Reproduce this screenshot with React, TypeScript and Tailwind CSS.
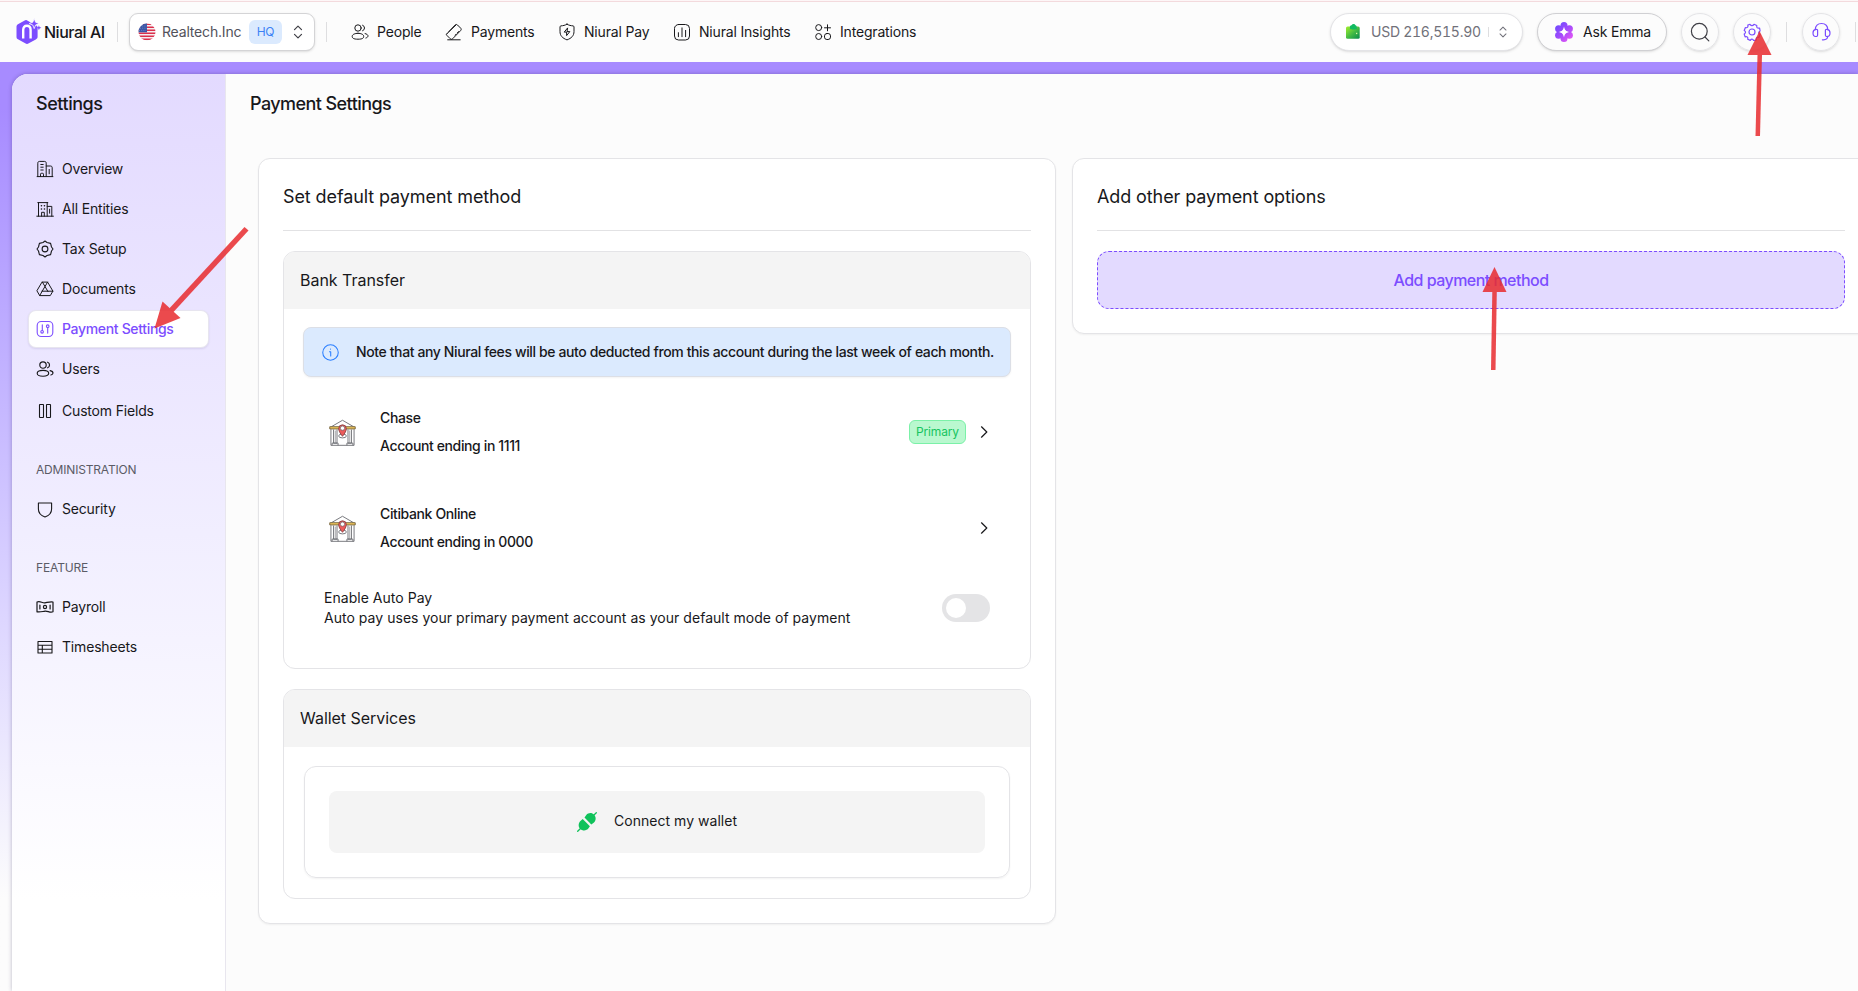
import type { ReactNode } from "react";

type IconProps = { children: ReactNode; className?: string; box?: string; w?: number };

function Icon({ children, className = "size-[18px]", box = "0 0 18 18", w = 1 }: IconProps) {
  return (
    <svg
      viewBox={box}
      className={`shrink-0 ${className}`}
      fill="none"
      stroke="currentColor"
      strokeWidth={w}
      strokeLinecap="round"
      strokeLinejoin="round"
    >
      {children}
    </svg>
  );
}

const People = ({ w }: { w?: number }) => (
  <Icon w={w}>
    <circle cx="7" cy="5" r="3.200" />
    <path d="M11.600 2.200a3 3 0 0 1 0 5.600" />
    <path d="M7 10.300c3.300 0 5.700 1.300 5.700 3s-1 2.900-5.700 2.900-5.800-1.200-5.800-2.900 2.500-3 5.800-3z" />
    <path d="M14.100 10.600c1.700.4 2.900 1.200 2.900 2.300 0 1-.8 1.700-2.100 2.100" />
  </Icon>
);

const Eraser = () => (
  <Icon>
    <path d="M1.800 10.900 10 2.100c.8-.8 1.700-.8 2.500-.1l3.100 3.100c.8.8.8 1.700 0 2.500l-7.900 8.100c-.8.8-1.700.8-2.500 0l-3.400-3.400c-.5-.5-.5-.9 0-1.400z" />
    <path d="m3.600 9 7.400-7M2.700 16.800h12.500M10.200 12.100l.9-.9M12.300 9.900l1.300-1.400" />
  </Icon>
);

const ShieldBolt = () => (
  <Icon>
    <path d="M9 1.200c2 1.200 4 1.500 6.100 1.700.6.100.9.400.9 1v4.600c0 4.300-2.600 6.700-7 8.400-4.400-1.700-7-4.100-7-8.400V3.900c0-.6.3-.9.900-1C5 2.700 7 2.400 9 1.200z" />
    <path d="M9.400 5.200 6.200 9.100h2.400v3.500l3.200-4H9.400z" />
  </Icon>
);

const Chart = () => (
  <Icon>
    <rect x="1.500" y="1.500" width="15" height="15.500" rx="4" />
    <path d="M5.400 9.700v4M9 4.900v8.800M12.600 7.400v6.300" />
  </Icon>
);

const Apps = () => (
  <Icon>
    <circle cx="4.700" cy="4.600" r="3" />
    <circle cx="4.700" cy="13.500" r="3" />
    <rect x="10.500" y="10.500" width="6" height="6" rx="2.400" />
    <path d="M13.500 1.800v6M10.500 4.800h6" />
  </Icon>
);

const Tower = () => (
  <Icon>
    <path d="M1.800 16.600V3.200c0-1.200.6-1.800 1.800-1.800h4.800c1.200 0 1.800.6 1.800 1.800v13.400M10.200 6h4.200c1.200 0 1.800.6 1.800 1.800v8.800M1.100 16.600h15.800M4.500 16.600v-2.400c0-.6.3-.9.900-.9h1.200c.6 0 .9.300.9.900v2.400" />
    <path d="M4.800 4.500h2.400M4.800 7.200h2.400M4.800 10h2.400M13.200 9.400v4.400" />
  </Icon>
);

const Office = () => (
  <Icon>
    <path d="M.8 16.200h16.600M2.500 16.200V2.600M1.800 2.600h10M11.200 2.600v13.600M11.200 6.400h4.600v9.800M5.600 16.200v-3.900h2.700v3.900M13.600 9.200v4" />
    <path d="M5.400 5.800h.1M8.400 5.800h.1M5.400 8.900h.1M8.400 8.900h.1" strokeWidth="1.500" />
  </Icon>
);

const Badge = () => (
  <Icon w={1.100}>
    <path d="M9 1 11 2.500 14.600 3.400 15.500 7 17 9 15.500 11 14.600 14.600 11 15.500 9 17 7 15.500 3.400 14.600 2.500 11 1 9 2.500 7 3.400 3.400 7 2.500z" />
    <circle cx="9" cy="9" r="2.900" />
  </Icon>
);

const Drive = () => (
  <Icon>
    <path d="M6.400 2.100h5.200l5.300 9-2.600 4.500H3.700l-2.600-4.500z" />
    <path d="M6.400 2.100 9 6.500l3 5.100M11.600 2.100 5.900 11.700l-2.200 3.900M5.900 11.200h11" />
  </Icon>
);

const Sliders = () => (
  <Icon w={1.100}>
    <rect x="1.200" y="1.500" width="15.600" height="15" rx="4" />
    <path d="M6.300 4.900v5.600M11.700 7.500v5.600" />
    <circle cx="6.100" cy="11.800" r="1.300" />
    <circle cx="11.700" cy="6.200" r="1.300" />
  </Icon>
);

const Columns = () => (
  <Icon w={1.100}>
    <rect x="3.500" y="2.500" width="4" height="13" rx=".4" />
    <rect x="10.500" y="2.500" width="4" height="13" rx=".4" />
  </Icon>
);

const Shield = () => (
  <Icon w={1.100}>
    <path d="M2.400 3h13.200v6c0 3.900-2.600 6.600-6.600 8-4-1.400-6.600-4.100-6.600-8z" />
  </Icon>
);

const Cash = () => (
  <Icon w={1.200}>
    <path d="M1 4c3-1.600 5.300 1.300 8 .8 3-.5 5-1.200 8-.8v9.800c-3 1.500-5.300-1.200-8-.7-3 .5-5 1.300-8 .7z" />
    <circle cx="9" cy="9" r="1.600" />
    <path d="M3.900 7v4M14.100 7v4" />
  </Icon>
);

const Table = () => (
  <Icon w={1.100}>
    <path d="M2 3.500h14V15H2zM2 7.200h14M2 11.200h14M6.300 7.200V15" />
  </Icon>
);

const UpDown = ({ className }: { className: string }) => (
  <Icon box="0 0 10 14" className={className} w={1.200}>
    <path d="M1.500 4.700 5 1.200l3.500 3.500M1.500 9.300 5 12.800l3.500-3.500" />
  </Icon>
);

const Logo = () => (
  <svg viewBox="0 0 26 26" className="size-[26px] shrink-0 overflow-visible">
    <path
      d="M10.300 1 17 4.700c3.500 1.900 4.600 2 4.600 4v8.800c0 1.500-.4 2.100-1.800 2.900l-7 3.900c-1.400.8-2.200.8-3.600 0l-6.800-3.800C1 19.700.5 19.200.5 17.700V8c0-1.500.5-2.100 1.900-2.900L8.700 1.400c.7-.4 1-.6 1.600-.4z"
      fill="#7c4dff"
    />
    <path d="M7.200 19.500V11c0-3 1.400-4.300 3.700-4.300s3.700 1.300 3.700 4.300v8.500" fill="none" stroke="#fff" strokeWidth="2.400" />
    <path d="m18.200-.4 1.400 3.600 3.600 1.400-3.600 1.400-1.400 3.600-1.400-3.600-3.600-1.400 3.600-1.400z" fill="#7c4dff" stroke="#fcfcfc" strokeWidth=".8" />
    <path d="m22.900 6.200.7 1.800 1.800.7-1.800.7-.7 1.800-.7-1.800-1.800-.7 1.800-.7z" fill="#7c4dff" />
  </svg>
);

const Flag = () => (
  <svg viewBox="0 0 18 18" className="size-[18px] shrink-0">
    <clipPath id="flag">
      <circle cx="9" cy="9" r="8.500" />
    </clipPath>
    <g clipPath="url(#flag)">
      <rect width="18" height="18" fill="#f5eef0" />
      <path d="M0 1.300h18M0 4.300h18M0 7.300h18M0 10.300h18M0 13.300h18M0 16.300h18" stroke="#dc2f4b" strokeWidth="1.400" />
      <rect width="9" height="9.300" fill="#3a56a5" />
      <path d="M2 3h7M2 5.200h7M1 7.400h7" stroke="#8fa3d6" strokeWidth=".6" strokeDasharray="1 1.200" />
    </g>
  </svg>
);

const Wallet = () => (
  <svg viewBox="0 0 14 15" className="h-[15px] w-[14px] shrink-0">
    <defs>
      <linearGradient id="wal" x1="0" y1="0" x2="1" y2="1">
        <stop offset="0" stopColor="#a3f02c" />
        <stop offset=".55" stopColor="#3fb845" />
        <stop offset="1" stopColor="#088a4c" />
      </linearGradient>
    </defs>
    <rect x="0" y="2.500" width="13.700" height="12.300" rx="1.500" fill="url(#wal)" />
    <path d="M4 3.500c-.2-1.600.3-2 1.500-2.200C6.500-.4 8.700-.3 9.500 1.300c1 .3 1.500.8 1.300 3.700-1 .6-5.600.6-6.600 0z" fill="#12bb62" />
    <rect x="10" y="8.800" width="1.300" height="1.300" fill="#d9f99d" />
  </svg>
);

const Emma = () => (
  <svg viewBox="0 0 20 20" className="size-5 shrink-0">
    <defs>
      <linearGradient id="em" gradientUnits="userSpaceOnUse" x1="2" y1="2" x2="18" y2="18">
        <stop offset="0" stopColor="#6d4aff" />
        <stop offset=".5" stopColor="#a24bfb" />
        <stop offset="1" stopColor="#e957f5" />
      </linearGradient>
    </defs>
    <g fill="url(#em)">
      <path d="M10 2.500 16.500 6.200v7.600L10 17.500l-6.500-3.700V6.200z" />
      <circle cx="10" cy="3.600" r="3.500" />
      <circle cx="15.400" cy="6.800" r="3.500" />
      <circle cx="15.400" cy="13.200" r="3.500" />
      <circle cx="10" cy="16.400" r="3.500" />
      <circle cx="4.600" cy="13.200" r="3.500" />
      <circle cx="4.600" cy="6.800" r="3.500" />
    </g>
    <path d="M10 4.500c.8 3.700 1.800 4.700 5.500 5.500-3.700.8-4.700 1.800-5.500 5.500-.8-3.700-1.800-4.700-5.500-5.500 3.700-.8 4.700-1.800 5.500-5.500z" fill="#fff" />
  </svg>
);

const Gear = () => (
  <Icon w={1.200} className="size-[18px] text-[#7c4dff]">
    <path d="M7 1.300c.7 1 1.200 1.400 2 1.400s1.300-.4 2-1.400l2.800 1.200c-.2 1.300 0 2 .5 2.400.5.400 1.100.4 2.300.2l.5 2.900c-1.100.5-1.400 1.100-1.400 1.800s.5 1.200 1.400 1.700l-1.300 2.900c-1.200-.3-1.900-.1-2.300.4-.4.500-.4 1.100-.1 2.200l-2.800.5c-.4-1-.9-1.300-1.600-1.300s-1.200.4-1.700 1.200l-2.600-1.200c.3-1.100.1-1.800-.4-2.200-.5-.4-1.100-.4-2.200-.1L1.200 11c1-.5 1.300-1.100 1.300-1.800S2.200 8 1.200 7.500l1.200-2.900c1.100.3 1.800.1 2.200-.4.400-.5.500-1.100.2-2.100z" />
    <circle cx="9" cy="9" r="3" />
  </Icon>
);

const Headset = () => (
  <Icon w={1.200} className="size-[19px] text-[#7c4dff]" box="0 0 19 19">
    <path d="M3.300 7.600C3.300 3.700 5.700 1.500 9.500 1.500s6.200 2.200 6.200 6.100M15.700 14.300c0 2.400-1.700 3.500-4.300 3.500h-1" />
    <path d="M3.800 7.300C2 7.500 1 9 1 10.900s1 3.500 2.700 3.600c1.300.1 2-.6 1.900-1.800V8.500c0-.9-.8-1.300-1.800-1.200zM15.200 7.300c1.800.2 2.800 1.700 2.800 3.600s-1 3.500-2.700 3.600c-1.300.1-2-.6-1.900-1.800V8.500c0-.9.800-1.300 1.800-1.200z" />
  </Icon>
);

const Bank = () => (
  <svg viewBox="0 0 28 28" className="size-[27px] shrink-0" fill="none" stroke="#66676d" strokeWidth=".9" strokeLinejoin="round">
    <path d="M2.500 8 14 1.300 25.500 8" />
    <path d="M2 10.700v16.600h24V10.700M4.700 11v14h3.600V11M19.700 11v14h3.600V11M3.200 27.300V25h6.200v2.300M18.600 27.300V25h6.200v2.300" />
    <path d="M6.500 12v12.500M21.500 12v12.500" strokeWidth=".6" />
    <rect x=".8" y="8" width="26.400" height="2.300" fill="#f5c95b" stroke="#6b5a35" />
    <ellipse cx="14" cy="17.600" rx="4" ry="2" />
    <path d="M14 18c-2-2.600-4-5.300-4-8a4 4 0 0 1 8 0c0 2.700-2 5.400-4 8z" fill="#ec5b5b" stroke="#7d3a3c" strokeWidth=".8" />
    <circle cx="14" cy="9.500" r="2.200" fill="#fff" strokeWidth=".7" />
  </svg>
);

const Plug = () => (
  <svg viewBox="0 0 20 20" className="size-5 shrink-0" fill="#10c25b">
    <path d="M.7 19.300 4 16M16 4l3.300-3.300" stroke="#10c25b" strokeWidth="1.300" strokeLinecap="round" />
    <path d="m5.700 7.100 7.200 7.200-1.400 2c-1.700 2.500-5.700 3-8.200.7s-1.900-6.200.4-8.200z" />
    <path d="M7.500 5.600 9.300 3c2-2.400 5.500-2.700 7.800-.3s2 6-.4 8l-2.400 1.700z" />
  </svg>
);

const navItems: [ReactNode, string, string][] = [
  [<People />, "People", "w-[94px]"],
  [<Eraser />, "Payments", "w-[113px]"],
  [<ShieldBolt />, "Niural Pay", "w-[115px]"],
  [<Chart />, "Niural Insights", "w-[141px]"],
  [<Apps />, "Integrations", ""],
];

function SideItem({ icon, label, active }: { icon: ReactNode; label: string; active?: boolean }) {
  return (
    <div
      className={`flex h-[38px] w-[181px] items-center gap-2 rounded-lg pl-2 text-sm ${
        active
          ? "bg-white font-medium tracking-[-0.33px] text-[#7c4dff] shadow-[inset_0_0_0_1px_rgba(60,40,120,0.12),0_1px_2px_rgba(60,40,120,0.12)]"
          : "tracking-[-0.18px] text-[#18181b]"
      }`}
    >
      {icon}
      {label}
    </div>
  );
}

function Divider() {
  return <div className="h-5 w-px shrink-0 bg-[#dedee0]" />;
}

function Header() {
  return (
    <header className="flex h-[62px] shrink-0 items-center border-t border-[#fdf6f7] bg-[#fcfcfc] pl-4 text-sm tracking-[-0.18px] text-[#18181b] shadow-[inset_0_1px_0_#f3dadd]">
      <div className="flex w-[101px] items-center gap-0.5">
        <Logo />
        <span className="text-base font-medium tracking-[-0.48px] whitespace-nowrap">Niural AI</span>
      </div>
      <Divider />
      <div className="ml-[11px] flex h-[38px] w-[186px] items-center rounded-[9px] border border-[#d4d4d6] bg-white pl-2 shadow-sm">
        <Flag />
        <span className="ml-1.5 w-[87px] text-[#52525b]">Realtech.Inc</span>
        <span className="flex h-6 w-[33px] items-center justify-center rounded-md bg-[#dbeafe] text-xs text-[#3b82f6]">HQ</span>
        <UpDown className="ml-[11px] h-[14px] w-[10px] text-[#3f3f46]" />
      </div>
      <div className="ml-[11px] flex">
        <Divider />
      </div>
      <nav className="ml-6 flex items-center">
        {navItems.map(([icon, label, width]) => (
          <div key={label} className={`flex items-center gap-2 whitespace-nowrap ${width}`}>
            {icon}
            {label}
          </div>
        ))}
      </nav>
      <div className="ml-auto flex w-[528px] shrink-0 items-center">
        <div className="flex h-[38px] w-[193px] items-center rounded-full border border-[#e4e4e7] bg-white pl-[15px] shadow-sm">
          <Wallet />
          <span className="ml-[11px] w-[117px] tracking-[-0.26px] whitespace-nowrap text-[#71717a] tabular-nums">USD 216,515.90</span>
          <div className="h-2.5 w-px bg-[#dedee0]" />
          <UpDown className="ml-[9px] h-3 w-2.5 text-[#71717a]" />
        </div>
        <div className="ml-3.5 flex h-[38px] w-[130px] items-center gap-[9px] rounded-full border border-[#d0d0d3] bg-[#fcfcfc] pl-4 shadow-sm">
          <Emma />
          Ask Emma
        </div>
        <div className="ml-3.5 flex size-[38px] items-center justify-center rounded-full border border-[#e4e4e7] shadow-sm">
          <Icon w={1.200} className="size-5 text-[#3f3f46]" box="0 0 20 20">
            <circle cx="9.300" cy="9.300" r="7.900" />
            <path d="m15 15 3.800 3.800" />
          </Icon>
        </div>
        <div className="ml-3.5 flex size-[38px] items-center justify-center rounded-full border border-[#e4e4e7] shadow-sm">
          <Gear />
        </div>
        <div className="mr-[15px] ml-[15px]">
          <Divider />
        </div>
        <div className="flex size-[38px] items-center justify-center rounded-full border border-[#e4e4e7] shadow-sm">
          <Headset />
        </div>
        <div className="ml-[15px]">
          <Divider />
        </div>
      </div>
    </header>
  );
}

function Sidebar() {
  return (
    <aside className="w-[214px] shrink-0 border-r border-[#e8e6ee] bg-linear-to-b from-[#e3daff] via-[#f1eeff] via-50% to-white to-[90%]">
      <h2 className="mt-4 ml-6 text-lg leading-7 font-medium tracking-[-0.45px] text-[#18181b]">Settings</h2>
      <div className="mt-8 ml-4 flex flex-col gap-0.5">
        <SideItem icon={<Tower />} label="Overview" />
        <SideItem icon={<Office />} label="All Entities" />
        <SideItem icon={<Badge />} label="Tax Setup" />
        <SideItem icon={<Drive />} label="Documents" />
        <SideItem icon={<Sliders />} label="Payment Settings" active />
        <SideItem icon={<People w={1.150} />} label="Users" />
        <div className="mt-0.5">
          <SideItem icon={<Columns />} label="Custom Fields" />
        </div>
      </div>
      <div className="mt-8 ml-6 text-xs leading-4 tracking-[-0.18px] text-[#5b5b66]">ADMINISTRATION</div>
      <div className="mt-3 ml-4">
        <SideItem icon={<Shield />} label="Security" />
      </div>
      <div className="mt-8 ml-6 text-xs leading-4 tracking-[-0.14px] text-[#5b5b66]">FEATURE</div>
      <div className="mt-3 ml-4 flex flex-col gap-0.5">
        <SideItem icon={<Cash />} label="Payroll" />
        <SideItem icon={<Table />} label="Timesheets" />
      </div>
    </aside>
  );
}

function Account({ name, ending, primary }: { name: string; ending: string; primary?: boolean }) {
  return (
    <div className="flex h-24 items-center pr-[22px] pl-[26px]">
      <Bank />
      <div className="ml-6 flex-1 text-sm leading-7 font-medium tracking-[-0.38px]">
        <p>{name}</p>
        <p>{ending}</p>
      </div>
      {primary && (
        <span className="mr-[13px] flex h-6 w-[57px] items-center justify-center rounded-md border border-[#7bf1a8] bg-[#b9f8cf] text-xs tracking-[-0.15px] text-[#16c45f]">
          Primary
        </span>
      )}
      <Icon box="0 0 10 12" className="h-3 w-2.5" w={1.200}>
        <path d="M2.500.8 7.800 6l-5.300 5.200" />
      </Icon>
    </div>
  );
}

function Card({ title, className, children }: { title: string; className: string; children: ReactNode }) {
  return (
    <section className={`shrink-0 rounded-xl border border-[#e4e4e7] bg-white px-6 pb-6 shadow-xs ${className}`}>
      <h3 className="flex h-[72px] items-center border-b border-[#e2e2e4] pt-[5px] text-lg tracking-[-0.1px]">{title}</h3>
      {children}
    </section>
  );
}

function Group({ title, className, children }: { title: string; className: string; children: ReactNode }) {
  return (
    <div className={`overflow-hidden rounded-xl border border-[#e4e4e7] ${className}`}>
      <h4 className="flex h-[57px] items-center bg-[#f4f4f4] pb-0.5 pl-4 text-base tracking-[-0.03px]">{title}</h4>
      {children}
    </div>
  );
}

function Arrow({ className, tip, line, box }: { className: string; tip: string; line: string; box: string }) {
  return (
    <svg viewBox={box} className={`pointer-events-none absolute ${className}`} fill="#e82c30" fillOpacity=".86">
      <path d={tip} />
      <path d={line} />
    </svg>
  );
}

export default function App() {
  return (
    <div className="relative flex h-[991px] w-[1858px] flex-col overflow-hidden bg-[#fcfcfc] font-['Inter',sans-serif] text-[#18181b]">
      <Header />
      <div className="flex min-h-0 flex-1 bg-linear-to-b from-[#a78bff] from-5% via-[#ddd6ff] via-60% to-[#fcfcfc] to-90% pt-3 pl-3">
        <div className="flex min-w-0 flex-1 overflow-hidden rounded-tl-2xl bg-[#fcfcfc] shadow-[0_0_4px_rgba(30,20,70,0.3)]">
          <Sidebar />
          <main className="flex min-w-0 flex-1 flex-col">
            <h1 className="mt-4 ml-6 text-lg leading-7 font-medium tracking-[-0.57px]">Payment Settings</h1>
            <div className="mt-10 ml-8 flex items-start gap-4">
              <Card title="Set default payment method" className="w-[798px]">
                <Group title="Bank Transfer" className="mt-5 h-[418px]">
                  <div className="mx-[19px] mt-[18px] flex h-[50px] items-center rounded-lg border border-[#dcdfe6] bg-[#dbeafe] pl-[18px] text-sm font-medium tracking-[-0.385px] whitespace-nowrap shadow-xs">
                    <Icon box="0 0 16 16" className="mr-[17px] size-[17px] text-[#2b7fff]" w={1}>
                      <circle cx="8" cy="8" r="7.300" />
                      <path d="M7 7.300h1.200v4M8 4.800h.1" />
                    </Icon>
                    Note that any Niural fees will be auto deducted from this account during the last week of each month.
                  </div>
                  <div className="mx-[19px] mt-[7px]">
                    <Account name="Chase" ending="Account ending in 1111" primary />
                    <Account name="Citibank Online" ending="Account ending in 0000" />
                  </div>
                  <div className="mt-3 flex items-center justify-between pr-10 pl-10 text-sm tracking-[0.03px]">
                    <div>
                      <p>Enable Auto Pay</p>
                      <p>Auto pay uses your primary payment account as your default mode of payment</p>
                    </div>
                    <div className="flex h-7 w-12 items-center rounded-full bg-[#e4e4e6] pl-1">
                      <div className="size-5 rounded-full bg-white" />
                    </div>
                  </div>
                </Group>
                <Group title="Wallet Services" className="mt-5 h-[210px]">
                  <div className="mx-5 mt-[19px] rounded-xl border border-[#e4e4e7] p-6 shadow-xs">
                    <div className="flex h-[62px] items-center justify-center gap-[17px] rounded-lg bg-[#f4f4f4] text-sm tracking-[0.03px]">
                      <Plug />
                      <span className="pb-0.5">Connect my wallet</span>
                    </div>
                  </div>
                </Group>
              </Card>
              <Card title="Add other payment options" className="w-[798px]">
                <button className="mt-5 flex h-[58px] w-full items-center justify-center rounded-xl border border-dashed border-[#7c4dff] bg-[#e3daff] text-base font-medium tracking-[-0.53px] text-[#7c4dff]">
                  Add payment method
                </button>
              </Card>
            </div>
          </main>
        </div>
      </div>
      <Arrow className="top-[31px] left-[1746px] h-[106px] w-[26px]" box="0 0 26 106" tip="M13.500 0 25.500 24H1.500z" line="M11.500 24h4.500L14 105H9.500z" />
      <Arrow className="top-[267px] left-[1481px] h-[105px] w-[26px]" box="0 0 26 105" tip="M13.500 0 25.500 25H1.500z" line="M11.300 25h4.500l-1.300 78H10z" />
      <Arrow
        className="top-[226px] left-[153px] h-[104px] w-[97px]"
        box="0 0 97 104"
        tip="M1.500 102.500 9.500 75.500 27.500 92z"
        line="m16.500 82.200 4 3.700L95.500 4.500 91.500 1z"
      />
    </div>
  );
}
